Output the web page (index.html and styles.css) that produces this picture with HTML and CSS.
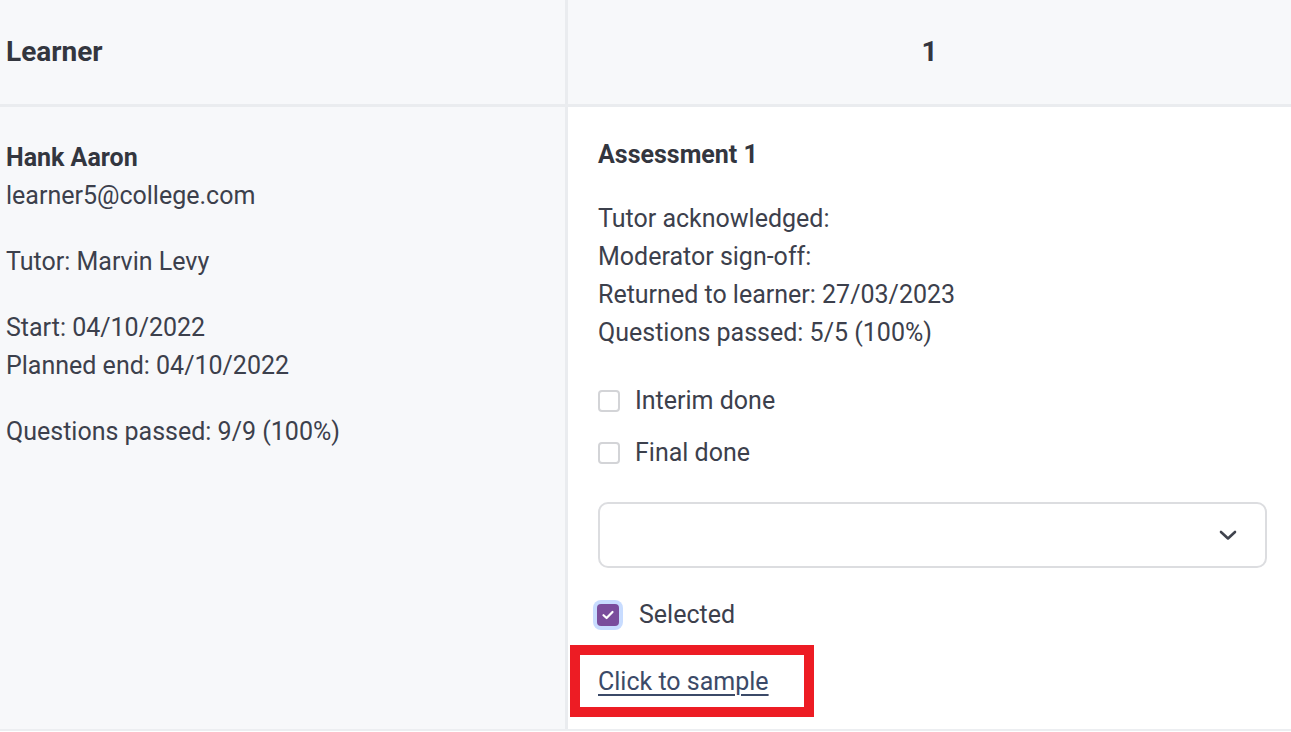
FILE: index.html
```html
<!DOCTYPE html>
<html lang="en">
<head>
<meta charset="utf-8">
<title>Learner assessment</title>
<link rel="stylesheet" href="styles.css">
</head>
<body>
<div class="table">
  <div class="head head-learner">Learner</div>
  <div class="head head-num">1</div>
  <div class="cell cell-learner">
    <div class="line bold">Hank Aaron</div>
    <div class="line">learner5@college.com</div>
    <div class="line gap">Tutor: Marvin Levy</div>
    <div class="line gap">Start: 04/10/2022</div>
    <div class="line">Planned end: 04/10/2022</div>
    <div class="line gap">Questions passed: 9/9 (100%)</div>
  </div>
  <div class="cell cell-assess">
    <div class="assess-title">Assessment 1</div>
    <div class="info">
      <div class="line">Tutor acknowledged:</div>
      <div class="line">Moderator sign-off:</div>
      <div class="line">Returned to learner: 27/03/2023</div>
      <div class="line">Questions passed: 5/5 (100%)</div>
    </div>
    <div class="checks">
      <label class="check"><span class="box"></span><span>Interim done</span></label>
      <label class="check"><span class="box"></span><span>Final done</span></label>
    </div>
    <div class="select">
      <svg class="chev" width="18" height="12" viewBox="0 0 18 12"><path d="M2 3 L9 9.5 L16 3" fill="none" stroke="#3f434d" stroke-width="2.6" stroke-linecap="round" stroke-linejoin="round"/></svg>
    </div>
    <label class="check selected"><span class="box checked"><svg width="14" height="12" viewBox="0 0 14 12"><path d="M2.5 6.2 L5.6 9 L11.5 3" fill="none" stroke="#fff" stroke-width="2.2" stroke-linecap="round" stroke-linejoin="round"/></svg></span><span class="sel-label">Selected</span></label>
    <div class="link-wrap">
      <a class="sample-link" href="#">Click to sample</a>
      <span class="highlight"></span>
    </div>
  </div>
</div>
</body>
</html>
```

FILE: styles.css
```css
html, body {
  margin: 0;
  padding: 0;
  background: #ffffff;
}
body {
  font-family: Roboto, "Liberation Sans", Arial, sans-serif;
  color: #3c404c;
  font-size: 25px;
  line-height: 38px;
}
.table {
  display: grid;
  grid-template-columns: 568px 1fr;
  width: 1291px;
  border-bottom: 2px solid #eceef1;
}
.head {
  background: #f7f8fa;
  height: 104px;
  border-bottom: 3px solid #eaecef;
  display: flex;
  align-items: center;
  font-size: 28px;
  font-weight: 700;
  color: #33363f;
}
.head-learner {
  padding-left: 6px;
  border-right: 3px solid #eaecef;
}
.head-num {
  justify-content: center;
}
.cell-learner {
  background: #f7f8fa;
  border-right: 3px solid #eaecef;
  padding: 32px 0 0 6px;
}
.line {
  white-space: nowrap;
}
.bold {
  font-weight: 700;
  color: #33363f;
}
.gap {
  margin-top: 28px;
}
.cell-assess {
  padding: 33px 24px 28px 30px;
  display: flex;
  flex-direction: column;
}
.assess-title {
  font-size: 25px;
  font-weight: 700;
  line-height: 30px;
  color: #33363f;
}
.info {
  margin-top: 30px;
}
.checks {
  margin-top: 29px;
  display: flex;
  flex-direction: column;
  gap: 12px;
}
.check {
  display: flex;
  align-items: center;
  gap: 15px;
  height: 40px;
}
.box {
  width: 18px;
  height: 18px;
  border: 2px solid #d3d4d7;
  border-radius: 4px;
  background: #fff;
  flex: none;
}
.select {
  margin-top: 29px;
  height: 62px;
  border: 2px solid #dcdde0;
  border-radius: 10px;
  display: flex;
  align-items: center;
  justify-content: flex-end;
  padding-right: 28px;
}
.selected {
  margin-top: 27px;
  gap: 20px;
}
.box.checked {
  width: 22px;
  height: 22px;
  border: none;
  background: #7a4d9c;
  border-radius: 4px;
  box-shadow: 0 0 0 4px #c8dcff;
  display: flex;
  align-items: center;
  justify-content: center;
  margin-left: -1px;
}
.link-wrap {
  position: relative;
  margin-top: 28px;
  align-self: flex-start;
}
.sample-link {
  color: #3b4a68;
  text-decoration: underline;
  text-decoration-thickness: 2px;
  text-underline-offset: 4px;
}
.highlight {
  position: absolute;
  left: -28px;
  top: -18px;
  width: 224px;
  height: 52px;
  border: 10px solid #ed1c24;
  pointer-events: none;
}
```
